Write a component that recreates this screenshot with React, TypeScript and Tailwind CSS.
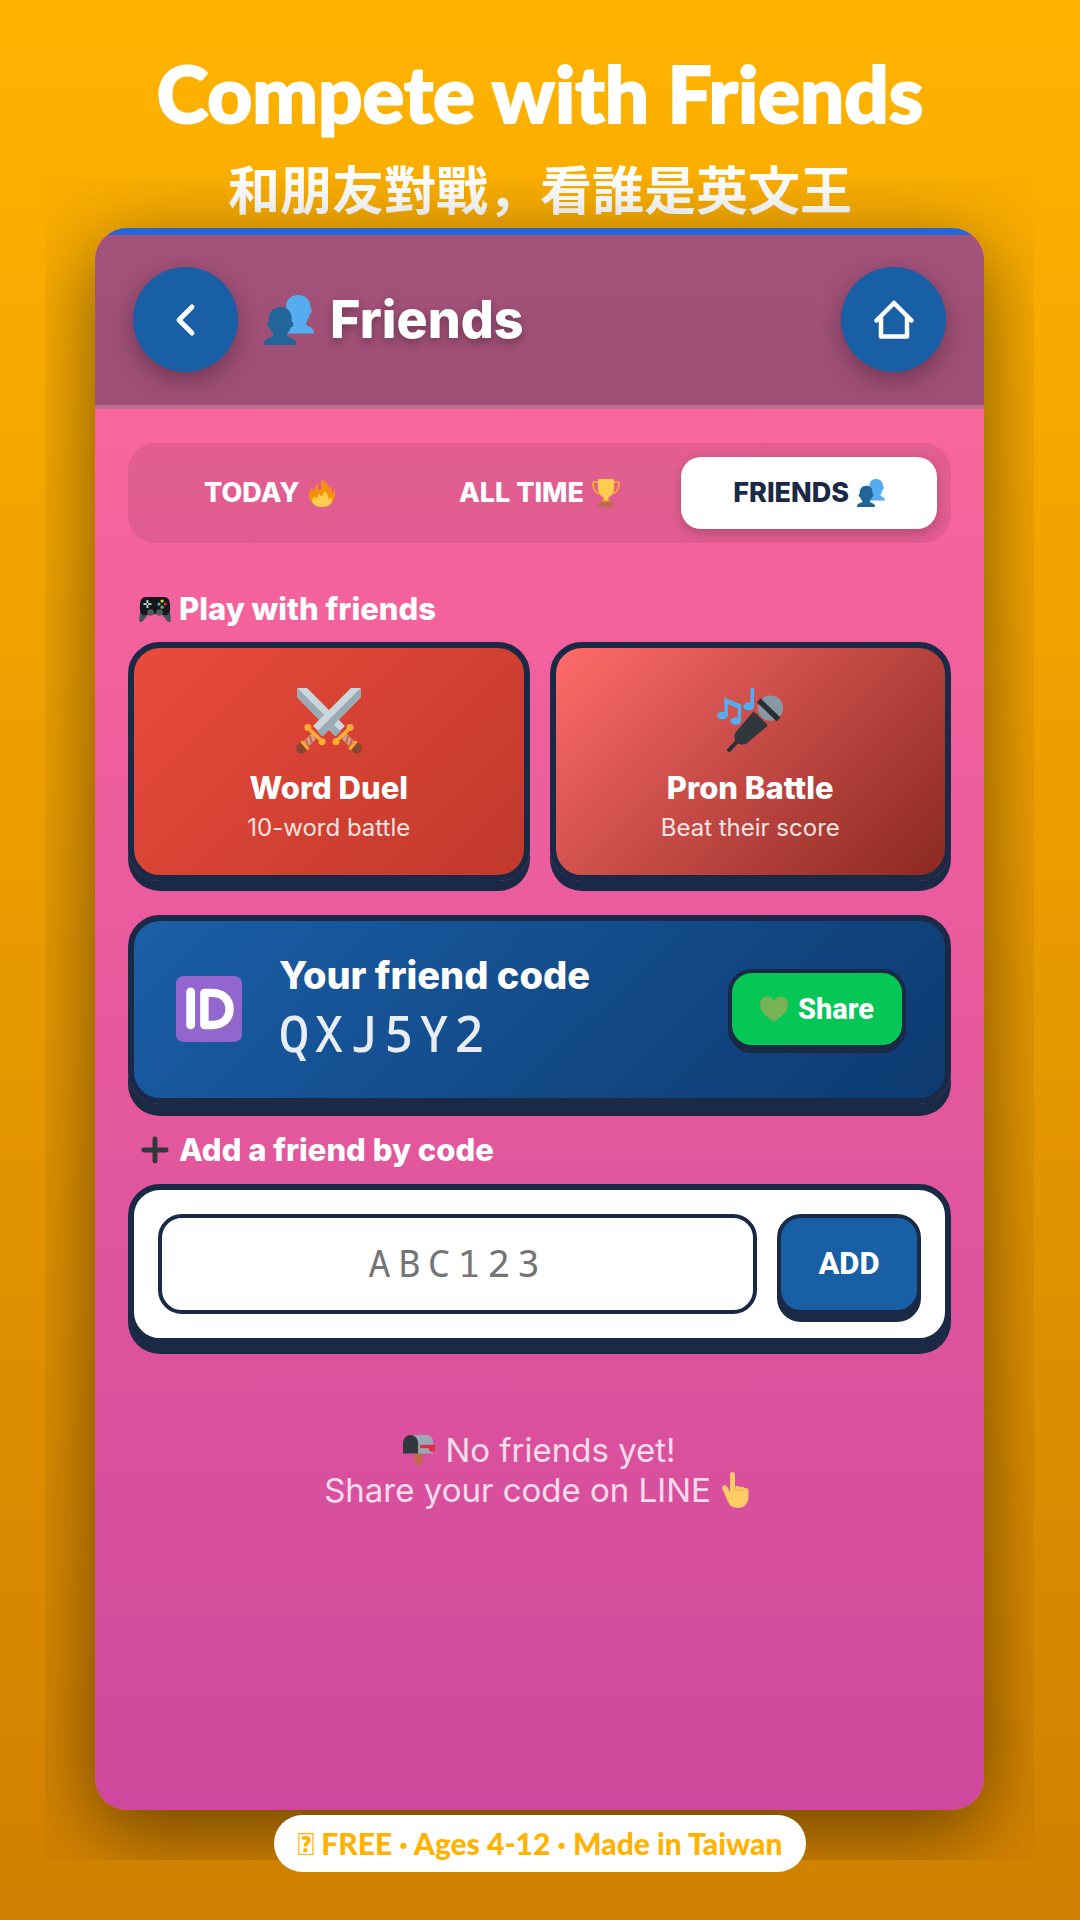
import React from "react";

type IconProps = { className?: string };

function Svg({ className = "", children }: IconProps & { children: React.ReactNode }) {
  return (
    <svg viewBox="0 0 36 36" className={`shrink-0 ${className}`} aria-hidden="true">
      {children}
    </svg>
  );
}

function Busts({ className }: IconProps) {
  return (
    <Svg className={className}>
      <path
        fill="#55ACEE"
        d="M24.6 0c-4.9 0-8.700 3.400-8.700 8.300 0 3 1 5.500 3 7.300L17 27.800h18.600c.4 0 .4-.2.400-.8 0-3.300-4-4.300-5.200-5.200-.9-.8-.6-2.200.3-3.300 1-1.500 1.500-3.300 1.800-5 .9.200 1.300-.9 1.600-2 .2-1-.3-1.700-1.100-1.800V8.300C33.400 3.400 29.500 0 24.600 0z"
      />
      <path
        fill="#226699"
        d="M12 8.600c-5 0-8.600 3.700-8.600 8.500v2.100c-.9 0-1.400.9-1.200 2 .2 1.300.9 2.100 1.700 1.900.4 1.600 1.100 3 2.200 4.100 1 1.100 1.100 2.300-.5 3.100C3.800 31.100 0 31.700 0 35.400c0 .5.200.6.500.6H22.700c.4 0 .5-.2.500-.6 0-3.600-3.700-4.300-5.500-5.100-1.600-.8-1.500-2-.5-3.100 1.100-1.200 1.800-2.600 2.200-4.100.9.100 1.500-.6 1.700-1.900.2-1.100-.300-2-1.100-2v-2.100c0-4.800-3.300-8.500-8-8.600z"
      />
    </Svg>
  );
}

function Fire({ className }: IconProps) {
  return (
    <Svg className={className}>
      <path
        fill="#F4900C"
        d="M35 19c0-2.100-.4-4.100-1-6-.5 2.800-1.800 4.500-3.500 5 1-5.500-1-7-1.500-9-1 .5-1.600 2.300-2 3.500C26 5 20.500 4 20.500 0c-3.500 2-4.400 6.300-3.500 9.500.7 2.600-.5 4.500-2 4.500-2 0-3.500-3-1.500-8-4.300 1.700-5.500 5-5 9-1.500.5-3-1-3-3.500C2.700 13.800 1 16.600 1 20c0 9 7.300 16 17 16s17-7.500 17-17z"
      />
      <path
        fill="#FFCC4D"
        d="M28.400 23c.1 1.800-.7 3.200-2.400 3 1-4-1.500-8-6-10.500.5 3.500-.5 6-2.500 6-1.500 0-2.500-1-2-3-2 1-3.700 3.500-3.500 6.500-1.800.5-3-1-3-3-2.200 1.900-4 4.500-4 7.500C7.500 33.500 12 36 18 36c7 0 12.600-3.500 13-8 .1-2-.8-4-2.600-5z"
      />
    </Svg>
  );
}

function Trophy({ className }: IconProps) {
  return (
    <Svg className={className}>
      <g fill="none" stroke="#F9AA33" strokeWidth="2.300">
        <path d="M9 4H3C1 4 1 5.500 1.300 7.500 2 14 5.500 18.500 12 19" />
        <path d="M27 4h6c2 0 2 1.500 1.700 3.500C34 14 30.500 18.500 24 19" />
      </g>
      <path fill="#FFCC4D" d="M7.500 1C8 .2 9 0 10 0h16c1 0 2 .2 2.500 1v9c0 7-3 11-7.500 14 0 3 .5 4.500 2 6H13c1.500-1.500 2-3 2-6-4.500-3-7.500-7-7.500-14z" />
      <path fill="#F9AA33" d="M14 27h8l1 3H13z" />
      <path fill="#C1694F" d="M8 35c0-3 1.500-6 5-6h10c3.500 0 5 3 5 6 0 .7-.3 1-1 1H9c-.7 0-1-.3-1-1z" />
    </Svg>
  );
}

function Gamepad({ className }: IconProps) {
  return (
    <Svg className={className}>
      <path fill="#4a5259" d="M3 14C1.500 18.500.3 26 .2 31c0 2.500 3.500 2 5.500-1l4.500-6h15.600l4.500 6c2 3 5.600 3.500 5.500 1-.1-5-1.300-12.500-2.800-17z" />
      <path fill="#15181b" d="M8 4.500h20c5 0 6.500 3 7 9.500.4 6-1 11-5 11-3.500 0-4-2-6.500-2h-11c-2.500 0-3 2-6.500 2-4 0-5.400-5-5-11C1.500 7.500 3 4.500 8 4.500z" />
      <circle cx="13" cy="22" r="3.700" fill="#4f5b63" />
      <circle cx="23" cy="22" r="3.700" fill="#4f5b63" />
      <path d="M9.500 8v9M5 12.500h9" stroke="#CCD6DD" strokeWidth="2" />
      <circle cx="9.500" cy="12.500" r="1" fill="#15181b" />
      <circle cx="26" cy="9" r="1.800" fill="#FFCC4D" />
      <circle cx="22.500" cy="12.500" r="1.800" fill="#55ACEE" />
      <circle cx="29.500" cy="12.500" r="1.800" fill="#DD2E44" />
      <circle cx="26" cy="16" r="1.800" fill="#78B159" />
    </Svg>
  );
}

function Sword() {
  return (
    <>
      <path fill="#CCD6DD" d="M30 0h5.200v5.200L14.800 26l-5.500-5.300z" />
      <path fill="#9AAAB4" d="M35.200 0v5.200L14.300 26.400l-2.700-2.700z" />
      <path d="m10.500 25.500-5 5" stroke="#D99E82" strokeWidth="3.800" />
      <path d="m9.800 24.300 1.500 4M7.500 26.200l1.300 4M5.400 28.200l1.500 3.600" stroke="#C1694F" strokeWidth="1" />
      <circle cx="2.900" cy="32.900" r="2.900" fill="#8A4633" />
      <path d="m3.400 29.500 3 3.500" stroke="#FFAC33" strokeWidth="1.600" strokeLinecap="round" />
      <path d="m7 22.300 7 6.500" stroke="#FFAC33" strokeWidth="1.900" />
      <circle cx="6.500" cy="21.500" r="1.900" fill="#FFAC33" />
      <circle cx="14.200" cy="29.300" r="1.900" fill="#FFAC33" />
    </>
  );
}

function Swords({ className }: IconProps) {
  return (
    <Svg className={className}>
      <g transform="matrix(-1 0 0 1 36 0)">
        <Sword />
      </g>
      <Sword />
    </Svg>
  );
}

function Microphone({ className }: IconProps) {
  return (
    <Svg className={className}>
      <path d="m12.500 27.500-6.500 7" stroke="#292F33" strokeWidth="2.200" />
      <path fill="#31373D" d="m20.800 13.500 6.400 6.200c.6.600.3 1-.3 1.600L16.500 30c-2 1.500-4.500.7-5.800-.6-1.400-1.400-1.600-4-.3-5.500l8.800-10.400c.6-.6 1.100-.6 1.600 0z" />
      <circle cx="29.200" cy="11" r="6.900" fill="#8899A6" />
      <path d="m23.800 7.700 8.700 8.400" stroke="#292F33" strokeWidth="3" strokeLinecap="square" />
      <g fill="#55ACEE">
        <ellipse cx="17.300" cy="10" rx="2.900" ry="2.200" />
        <path d="M18.200 0h2v10h-2z" />
        <ellipse cx="2.900" cy="15" rx="2.900" ry="2.100" />
        <ellipse cx="10.200" cy="18" rx="2.900" ry="2.100" />
        <path d="M4 5.200 13.200 9v9h-2v-7L6 8.800V15H4z" />
      </g>
    </Svg>
  );
}

function IdBadge({ className }: IconProps) {
  return (
    <Svg className={className}>
      <rect width="36" height="36" rx="4" fill="#9266CC" />
      <path d="M8 8.700v18" stroke="#fff" strokeWidth="4.800" strokeLinecap="round" />
      <path
        d="M15.500 9.200h4c6 0 9.700 3.500 9.700 8.700 0 5.500-3.700 8.800-9.700 8.800h-4z"
        fill="none"
        stroke="#fff"
        strokeWidth="4.600"
        strokeLinejoin="round"
      />
    </Svg>
  );
}

function Heart({ className }: IconProps) {
  return (
    <Svg className={className}>
      <path fill="#77B255" d="M36 11.500C36 6 32 2 27 2c-4 0-7.500 2.500-9 5.500C16.500 4.500 13 2 9 2 4 2 0 6 0 11.500 0 21 9 29 18 34c9-5 18-13 18-22.500z" />
    </Svg>
  );
}

function Plus({ className }: IconProps) {
  return (
    <Svg className={className}>
      <path d="M18 5.500v25M5.500 18h25" stroke="#31373D" strokeWidth="5.600" strokeLinecap="round" />
    </Svg>
  );
}

function Mailbox({ className }: IconProps) {
  return (
    <Svg className={className}>
      <path fill="#C1694F" d="M13 20h9v13c0 1.500-1 2-2 2h-4c-2 0-3-.5-3-2z" />
      <path fill="#99AAB5" d="M9 1h17c5 0 8 4 8 9v12H9z" />
      <path fill="#31373D" d="M0 11C0 5 3.500 1 8.500 1S17 5 17 11v11H0z" />
      <path fill="#DD2E44" d="M20.500 12H35c.7 0 1 .3 1 1v5c0 1.500-1.500 2-3.500 2S29 19 29 17v-1h-8.500c-2 0-2-4 0-4z" />
    </Svg>
  );
}

function PointUp({ className }: IconProps) {
  return (
    <Svg className={className}>
      <path
        fill="#FFCC66"
        d="M11 2.500C11 .9 12 0 13.500 0S16 .9 16 2.500V15c1-1.500 4-1.500 5 .5 1.500-1.500 4-.8 4.500.8 1.500-.8 4 0 4 2V25c0 6.500-4.500 11-10.500 11C13 36 10 33 8.200 28L3.500 17c-.8-2 0-3.500 1.500-3.800 1.500-.3 2.700.5 3.500 2L11 20z"
      />
      <path d="M16 15v3c1.200 1 3.700 1 5-.5 1.500 1 3.500.8 4.500-.8" fill="none" stroke="#EF9645" strokeWidth=".7" />
    </Svg>
  );
}

const tabs = [
  { label: "TODAY", Icon: Fire },
  { label: "ALL TIME", Icon: Trophy },
  { label: "FRIENDS", Icon: Busts, active: true },
];

const games = [
  { title: "Word Duel", note: "10-word battle", Icon: Swords, tone: "from-[#e94b3b] to-[#c0392b]" },
  { title: "Pron Battle", note: "Beat their score", Icon: Microphone, tone: "from-[#ff6b6b] to-[#8b2920]" },
];

const roundButton =
  "flex size-[105px] shrink-0 items-center justify-center rounded-full bg-[#195fa5] shadow-[0_8px_24px_rgba(0,0,0,0.3)]";

function SectionLabel({ Icon, children }: { Icon: React.FC<IconProps>; children: React.ReactNode }) {
  return (
    <span className="flex items-center gap-2 pl-[11px] text-[31px]/[36px] font-extrabold">
      <Icon className="size-8" />
      {children}
    </span>
  );
}

export default function App() {
  return (
    <main className="flex min-h-screen flex-col bg-linear-to-b from-[#ffb300] to-[#d08000] pt-[45px] pb-12 font-['Inter',sans-serif] text-white">
      <h1 className="text-center font-['Lato_Black','Lato',sans-serif] text-[78px]/[96px] font-black [-webkit-text-stroke:2px_white]">
        Compete with Friends
      </h1>
      <p className="mt-[17px] text-center font-['Noto_Sans_CJK_JP',sans-serif] text-[52px]/[60px] font-bold">
        和朋友對戰，看誰是英文王
      </p>

      <div className="relative -mt-10 mr-[46px] ml-[45px] flex flex-1 flex-col overflow-hidden p-[50px]">
        <section className="flex flex-1 flex-col overflow-hidden rounded-[32px] bg-linear-to-b from-[#ff6a9c] to-[#cf489d] shadow-[0_20px_80px_rgba(0,0,0,0.5)]">
          <div className="h-[7px] bg-[#2566d2]" />
          <header className="flex items-center border-b-4 border-[#b9708f] bg-linear-to-b from-[#a3527a] to-[#9f4e76] px-[38px] pt-8 pb-[33px]">
            <button type="button" aria-label="Back" className={roundButton}>
              <svg viewBox="0 0 24 24" className="size-12" fill="none" stroke="currentColor" strokeWidth="2.500" strokeLinecap="round" strokeLinejoin="round">
                <path d="M15 5.500 8.500 12l6.500 6.500" />
              </svg>
            </button>
            <h2 className="ml-[26px] flex flex-1 items-center gap-4 text-[52px]/[60px] font-extrabold text-shadow-[0_4px_8px_rgba(0,0,0,0.3)]">
              <Busts className="size-[50px]" />
              Friends
            </h2>
            <button type="button" aria-label="Home" className={roundButton}>
              <svg viewBox="0 0 40 40" className="size-10" fill="none" stroke="currentColor" strokeWidth="4.500" strokeLinecap="round" strokeLinejoin="round">
                <path d="M2.500 20.500 20 3l17.500 17.500M7 18v18.500h26V18" />
              </svg>
            </button>
          </header>

          <div className="flex flex-col px-[33px] pt-[34px] pb-10">
            <nav className="grid grid-cols-3 gap-[14px] rounded-[28px] bg-[#282828]/10 p-[14px]">
              {tabs.map(({ label, Icon, active }) => (
                <button
                  key={label}
                  type="button"
                  className={`flex h-[72px] items-center justify-center gap-2 rounded-[20px] text-[27px]/[36px] font-extrabold ${
                    active ? "bg-white text-[#1a2945] shadow-[0_4px_12px_rgba(0,0,0,0.2)]" : ""
                  }`}
                >
                  {label}
                  <Icon className="size-7" />
                </button>
              ))}
            </nav>

            <h3 className="mt-12">
              <SectionLabel Icon={Gamepad}>Play with friends</SectionLabel>
            </h3>
            <div className="mt-[15px] grid grid-cols-2 gap-5">
              {games.map(({ title, note, Icon, tone }) => (
                <button
                  key={title}
                  type="button"
                  className={`flex flex-col items-center rounded-[32px] border-6 border-[#1a2945] bg-linear-135 pt-10 pb-[33px] shadow-[0_10px_0_#1a2945] ${tone}`}
                >
                  <Icon className="size-[66px]" />
                  <span className="mt-4 text-[31px]/[36px] font-extrabold">{title}</span>
                  <span className="mt-2 text-[24px]/[28px] text-white/85">{note}</span>
                </button>
              ))}
            </div>

            <div className="mt-[34px] flex items-center rounded-[32px] border-6 border-[#1a2945] bg-linear-135 from-[#1a5fa8] to-[#0d3a70] pt-8 pr-[39px] pb-[33px] pl-[42px] shadow-[0_12px_0_#1a2945]">
              <IdBadge className="size-[66px]" />
              <div className="ml-[37px] flex-1 pb-1">
                <p className="text-[38px]/[44px] font-extrabold">Your friend code</p>
                <p className="mt-2 font-['Noto_Sans_Mono',monospace] text-[50px]/[56px] font-medium tracking-[5px] text-white/90">QXJ5Y2</p>
              </div>
              <button
                type="button"
                className="flex h-20 items-center gap-[10px] rounded-[24px] border-4 border-[#1a2945] bg-[#06c755] px-7 font-['Roboto',sans-serif] text-[29px]/[36px] font-extrabold shadow-[0_4px_0_#1a2945]"
              >
                <Heart className="size-7" />
                Share
              </button>
            </div>

            <label htmlFor="friend-code" className="mt-7">
              <SectionLabel Icon={Plus}>Add a friend by code</SectionLabel>
            </label>
            <form
              className="mt-4 flex gap-5 rounded-[32px] border-6 border-[#1a2945] bg-white p-6 shadow-[0_10px_0_#1a2945]"
              onSubmit={(e) => e.preventDefault()}
            >
              <input
                id="friend-code"
                placeholder="ABC123"
                maxLength={6}
                className="h-[100px] min-w-0 flex-1 rounded-[24px] border-4 border-[#1a2945] pb-1 text-center font-['Noto_Sans_Mono',monospace] text-[38px] tracking-[7px] text-[#1a2945] placeholder:text-[#757575]"
              />
              <button
                type="submit"
                className="h-[100px] w-36 rounded-[24px] border-4 border-[#1a2945] bg-[#195fa5] font-['Roboto',sans-serif] text-[31px]/[36px] font-extrabold shadow-[0_8px_0_#1a2945]"
              >
                ADD
              </button>
            </form>

            <div className="mt-[86px] flex flex-col items-center text-[33px]/[40px] text-white/80">
              <p className="flex items-center gap-[10px]">
                <Mailbox className="size-8" />
                No friends yet!
              </p>
              <p className="flex items-center gap-2">
                Share your code on LINE
                <PointUp className="size-9" />
              </p>
            </div>
          </div>
        </section>
      </div>

      <p className="relative -mt-[45px] self-center rounded-full bg-white px-6 py-[10px] font-['Lato_Black','Lato',sans-serif] text-[30px]/[37px] font-black text-[#ffb300]">
        {"\u{E010}"} FREE · Ages 4-12 · Made in Taiwan
      </p>
    </main>
  );
}
